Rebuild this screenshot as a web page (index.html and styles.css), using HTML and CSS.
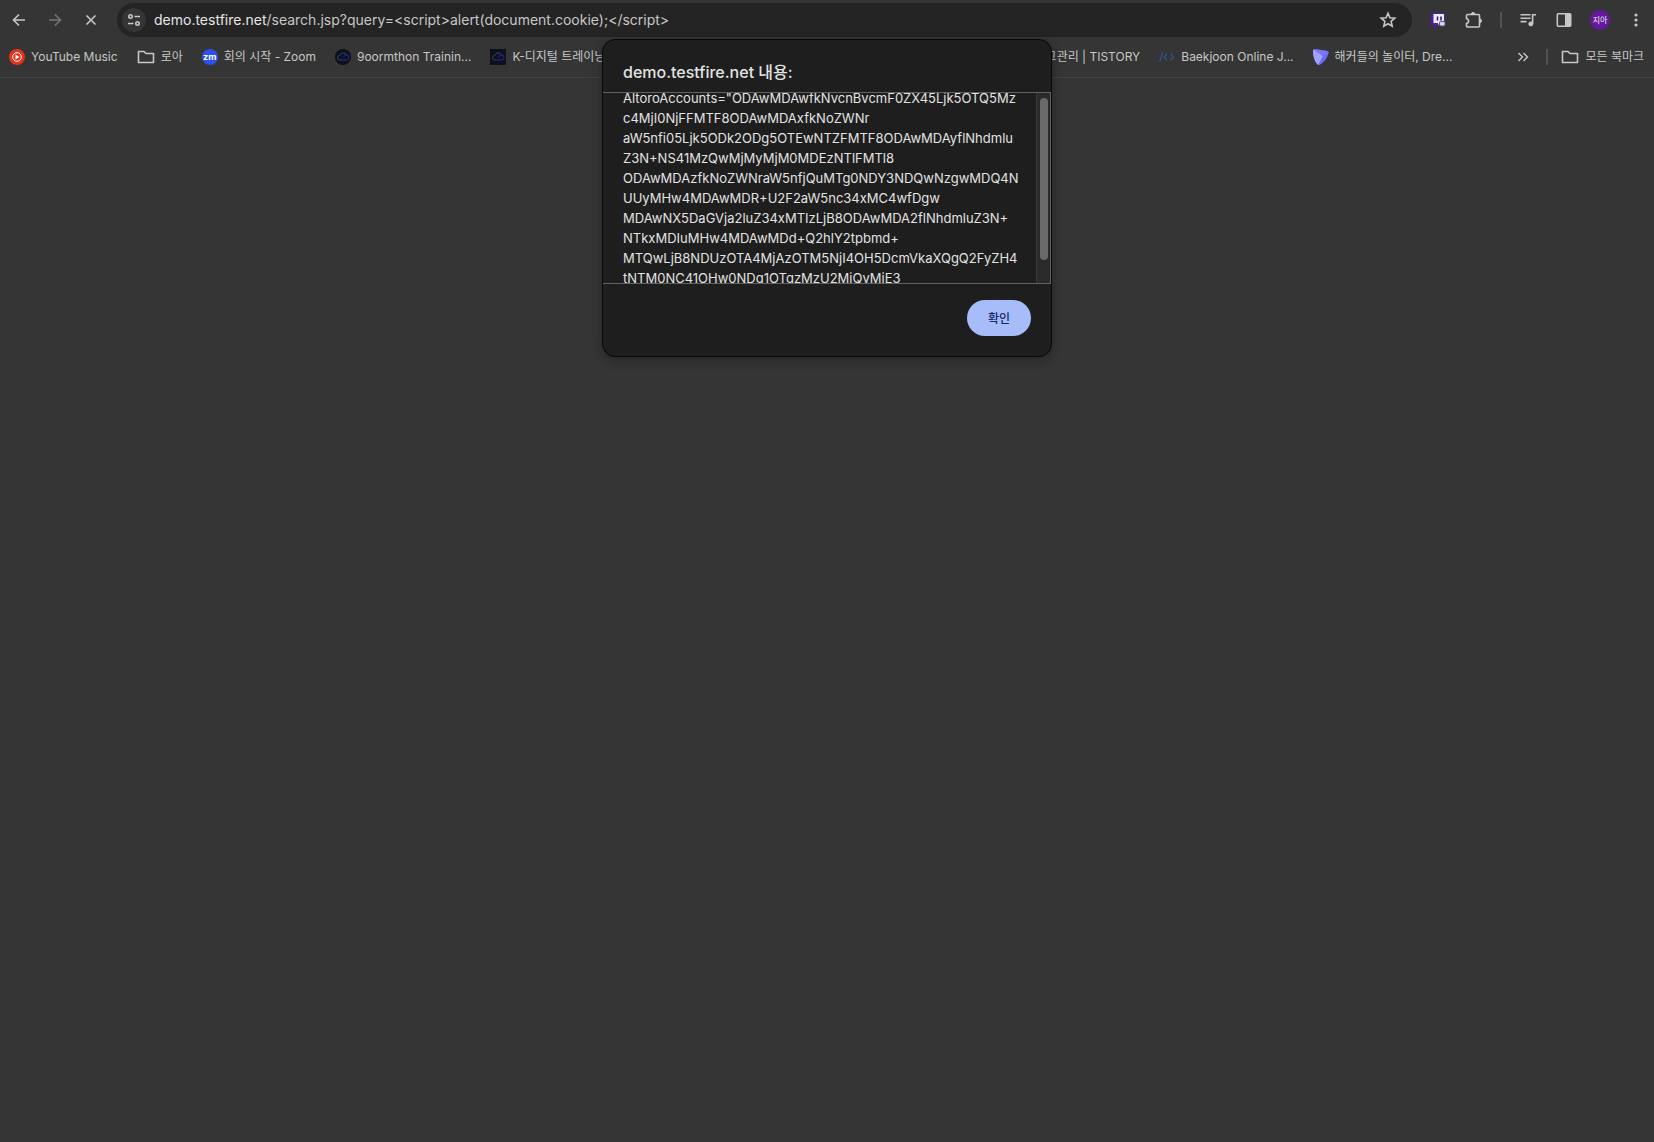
FILE: index.html
```html
<!DOCTYPE html>
<html lang="ko">
<head>
<meta charset="utf-8">
<title>demo.testfire.net</title>
<link rel="stylesheet" href="styles.css">
</head>
<body>
<header class="chrome">
  <div class="toolbar">
    <nav class="nav">
      <button class="icon-btn" aria-label="뒤로"><svg width="16" height="16" viewBox="0 0 16 16"><path d="M14 8H3M8 2.500 2.500 8 8 13.500" /></svg></button>
      <button class="icon-btn dim" aria-label="앞으로"><svg width="16" height="16" viewBox="0 0 16 16"><path d="M2 8h11M8 2.500 13.500 8 8 13.500" /></svg></button>
      <button class="icon-btn" aria-label="중지"><svg width="16" height="16" viewBox="0 0 16 16"><path d="M3.500 3.500l9 9M12.500 3.500l-9 9" /></svg></button>
    </nav>
    <div class="omnibox">
      <button class="site-info" aria-label="사이트 정보"><svg width="16" height="16" viewBox="0 0 16 16"><circle cx="4.500" cy="4.500" r="1.700"/><path d="M8.500 4.500H14M2 11.500h5.500"/><circle cx="11.500" cy="11.500" r="1.700"/></svg></button>
      <div class="url" role="textbox" aria-label="주소" tabindex="0"><span class="host">demo.testfire.net</span>/search.jsp?query=&lt;script&gt;alert(document.cookie);&lt;/script&gt;</div>
      <button class="icon-btn" aria-label="북마크 추가"><svg width="18" height="18" viewBox="0 0 18 18"><path d="M9 2.300l1.900 4.500 4.900.400-3.700 3.200 1.100 4.800L9 12.700l-4.200 2.500 1.100-4.800-3.700-3.200 4.900-.400z"/></svg></button>
    </div>
    <div class="actions">
      <button class="icon-btn" aria-label="Twitch"><svg width="16" height="16" viewBox="0 0 16 16"><path d="M2.500 1H15v12.500H7.500L5.500 15.500H4v-2H1V3z" fill="#4a1fa5" stroke="none"/><path d="M3.500 2H14v9h-3.500L8 13v-2H3.500z" fill="#eeeafa" stroke="none"/><path d="M7.500 4.500v4M11 4.500v4" stroke="#35207a"/><rect x="9.500" y="9.500" width="5.500" height="4.500" rx="1" fill="#d8d4e4" stroke="#5a4d80" stroke-width="1"/></svg></button>
      <button class="icon-btn" aria-label="확장 프로그램"><svg width="18" height="18" viewBox="0 0 18 18"><path d="M2.500 3.500h11q1 0 1 1v10.500q0 1-1 1h-11q-1 0-1-1V12.300c2.800 0 2.800-4.600 0-4.600V4.500q0-1 1-1z" stroke-linejoin="round"/><path d="M6 3.500a2 2 0 0 1 4 0zM14.500 7.800a2 2 0 0 1 0 4z" fill="currentColor" stroke-width="1"/></svg></button>
      <span class="sep"></span>
      <button class="icon-btn" aria-label="미디어"><svg width="16" height="16" viewBox="0 0 16 16"><path d="M.5 2.800h10M.5 6.200h10M.5 9.600h6M12.600 12V2.800h3.400"/><circle cx="10.800" cy="11.900" r="2" fill="currentColor" stroke-width="1"/></svg></button>
      <button class="icon-btn" aria-label="측면 패널"><svg width="16" height="16" viewBox="0 0 16 16"><rect x="1.300" y="1.800" width="13.400" height="12.400" rx="1"/><path d="M9 2h5.500v12H9z" fill="currentColor" stroke="none"/></svg></button>
      <button class="avatar" aria-label="프로필">지아</button>
      <button class="icon-btn" aria-label="메뉴"><svg width="16" height="16" viewBox="0 0 16 16"><g fill="currentColor" stroke="none"><circle cx="8" cy="3" r="1.600"/><circle cx="8" cy="8" r="1.600"/><circle cx="8" cy="13" r="1.600"/></g></svg></button>
    </div>
  </div>
  <nav class="bookmarks">
    <a class="bm" href="#"><svg width="16" height="16" viewBox="0 0 16 16"><circle cx="8" cy="8" r="8" fill="#e5331b" stroke="none"/><circle cx="8" cy="8" r="4.300" stroke="#fff" stroke-width="1"/><path d="M6.500 5.500v5L10.500 8z" fill="#fff" stroke="none"/></svg>YouTube Music</a>
    <a class="bm folder" href="#"><svg width="18" height="16" viewBox="0 0 18 16"><path d="M2 2.500h5l2 2h7.500v9H1.500v-11z" stroke-linejoin="round"/></svg>로아</a>
    <a class="bm" href="#"><span class="zoom-logo">zm</span>회의 시작 - Zoom</a>
    <a class="bm" href="#"><svg width="16" height="16" viewBox="0 0 16 16"><circle cx="8" cy="8" r="8" fill="#0e101b" stroke="none"/><path d="M6 11H5a2.300 2.300 0 0 1-.2-4.600A3.600 3.600 0 0 1 11.500 6" stroke="#23505f" stroke-width="1"/><path d="M6 11h5.500a2.500 2.500 0 0 0 0-5C10 6 9 7.300 8 8.500" stroke="#2929b0" stroke-width="1"/></svg>9oormthon Trainin...</a>
    <a class="bm" href="#"><svg width="16" height="16" viewBox="0 0 16 16"><path d="M0 0h16v16H0z" fill="#0e101b" stroke="none"/><path d="M6 11H5a2.300 2.300 0 0 1-.2-4.600A3.600 3.600 0 0 1 11.500 6" stroke="#23505f" stroke-width="1"/><path d="M6 11h5.500a2.500 2.500 0 0 0 0-5C10 6 9 7.300 8 8.500" stroke="#2929b0" stroke-width="1"/></svg>K-디지털 트레이닝</a>
    <a class="bm push" href="#">그관리 | TISTORY</a>
    <a class="bm" href="#"><svg width="16" height="16" viewBox="0 0 16 16"><path d="M3.500 3L.700 13M8 4.500 5 8l3 3.500M11.500 4.500l3 3.500-3 3.500" stroke="#2b568f" stroke-width="1.200"/></svg>Baekjoon Online J...</a>
    <a class="bm" href="#"><svg width="16" height="16" viewBox="0 0 16 16"><g stroke="none"><path d="M0 1.500Q0 0 2 0l12 2q2 .5 1.500 2.500Q13 12 8 15 6 17 4 15 0 10 0 1.500z" fill="#696bff"/><path d="M.5.500 10 7 5 16Q0 11 0 2z" fill="#a5a2ff"/><path d="M1 0l13 2q2 .5 1.500 2L10 7z" fill="#7b77fa"/></g></svg>해커들의 놀이터, Dre...</a>
    <div class="bm-end">
      <button class="icon-btn" aria-label="더보기"><svg width="14" height="14" viewBox="0 0 14 14"><path d="M2.500 3l4 4-4 4M7.500 3l4 4-4 4" stroke-width="1.400"/></svg></button>
      <span class="sep"></span>
      <a class="bm folder" href="#"><svg width="18" height="16" viewBox="0 0 18 16"><path d="M2 2.500h5l2 2h7.500v9H1.500v-11z" stroke-linejoin="round"/></svg>모든 북마크</a>
    </div>
  </nav>
</header>
<main class="page"></main>
<section class="dialog" role="alertdialog" aria-labelledby="dialog-title">
  <h1 class="dialog-title" id="dialog-title">demo.testfire.net 내용:</h1>
  <div class="dialog-body">
    <p class="message">AltoroAccounts="ODAwMDAwfkNvcnBvcmF0ZX45Ljk5OTQ5Mz<br>c4MjI0NjFFMTF8ODAwMDAxfkNoZWNr<br>aW5nfi05Ljk5ODk2ODg5OTEwNTZFMTF8ODAwMDAyflNhdmlu<br>Z3N+NS41MzQwMjMyMjM0MDEzNTlFMTl8<br>ODAwMDAzfkNoZWNraW5nfjQuMTg0NDY3NDQwNzgwMDQ4N<br>UUyMHw4MDAwMDR+U2F2aW5nc34xMC4wfDgw<br>MDAwNX5DaGVja2luZ34xMTIzLjB8ODAwMDA2flNhdmluZ3N+<br>NTkxMDIuMHw4MDAwMDd+Q2hlY2tpbmd+<br>MTQwLjB8NDUzOTA4MjAzOTM5NjI4OH5DcmVkaXQgQ2FyZH4<br>tNTM0NC41OHw0NDg1OTgzMzU2MjQyMjE3</p>
    <div class="track"><div class="thumb"></div></div>
  </div>
  <div class="dialog-actions"><button class="ok">확인</button></div>
</section>
</body>
</html>
```
FILE: styles.css
```css
* { box-sizing: border-box; }
body {
  margin: 0;
  min-height: 100vh;
  display: flex;
  flex-direction: column;
  background: #353535;
  color: #c7c7c7;
  font-family: Inter, "Noto Sans CJK KR", sans-serif;
  font-size: 12px;
}
button { border: 0; padding: 0; background: none; color: inherit; font: inherit; }
a { color: inherit; text-decoration: none; }
svg { display: block; flex: none; fill: none; stroke: currentColor; stroke-width: 1.6; }
.chrome { border-bottom: 1px solid #404040; }
.page { flex: 1; }
.toolbar { display: flex; align-items: center; height: 40px; }
.nav { display: flex; gap: 8px; padding: 0 12px 0 5px; }
.icon-btn {
  display: flex;
  flex: none;
  align-items: center;
  justify-content: center;
  width: 28px;
  height: 28px;
}
.dim { color: #757575; }
.omnibox {
  flex: 1;
  display: flex;
  align-items: center;
  gap: 8px;
  height: 34px;
  padding: 0 10px 0 5px;
  border-radius: 17px;
  background: #242424;
}
.site-info {
  display: flex;
  align-items: center;
  justify-content: center;
  width: 24px;
  height: 24px;
  border-radius: 12px;
  background: #353535;
}
.url { flex: 1; font-size: 14px; line-height: 20px; white-space: nowrap; }
.host { color: #e6e6e6; }
.actions { display: flex; align-items: center; gap: 8px; padding: 0 4px 0 12px; }
.sep { flex: none; width: 2px; height: 16px; background: #525252; }
.actions .sep { margin: 0 4px; }
.avatar {
  width: 20px;
  height: 20px;
  margin: 0 4px;
  border-radius: 10px;
  background: #65189b;
  color: #eee;
  font-size: 8px;
  line-height: 20px;
}
.bookmarks { display: flex; align-items: center; gap: 19px; height: 37px; padding: 0 10px 4px 9px; }
.bm { display: flex; align-items: center; gap: 6px; line-height: 20px; white-space: nowrap; }
.push { margin-left: auto; }
.zoom-logo {
  width: 16px;
  height: 16px;
  border-radius: 8px;
  background: #2d50ee;
  color: #fff;
  font-size: 9px;
  font-weight: 700;
  line-height: 15px;
  text-align: center;
}
.bm-end { display: flex; align-items: center; gap: 9px; margin-left: 38px; }
.bm-end .folder { padding-left: 4px; }
.dialog {
  position: absolute;
  top: 39px;
  left: 50%;
  width: 450px;
  transform: translateX(-50%);
  border: 1px solid #070707;
  border-radius: 13px;
  background: #1e1e1e;
  box-shadow: 0 3px 12px rgba(0, 0, 0, 0.3);
  color: #e3e3e3;
}
.dialog-title { margin: 0; padding: 20px 20px 8px; font-size: 16px; font-weight: 500; line-height: 24px; }
.dialog-body {
  display: flex;
  justify-content: space-between;
  height: 192px;
  overflow: hidden;
  border: solid #626262;
  border-width: 1px 1px 1px 0;
}
.message { margin: -5px 0 0; padding-left: 20px; font-size: 13px; line-height: 20px; white-space: nowrap; }
.track { width: 14px; padding: 5px 2px 0 3px; border-left: 1px solid #3b3b3b; background: #2a2a2a; }
.thumb { width: 8px; height: 162px; border-radius: 4px; background: #696969; }
.dialog-actions { display: flex; justify-content: flex-end; padding: 16px 20px 20px; }
.ok {
  width: 64px;
  height: 36px;
  padding-bottom: 2px;
  border-radius: 18px;
  background: #a6bdf9;
  color: #162767;
  font-weight: 500;
}
```
